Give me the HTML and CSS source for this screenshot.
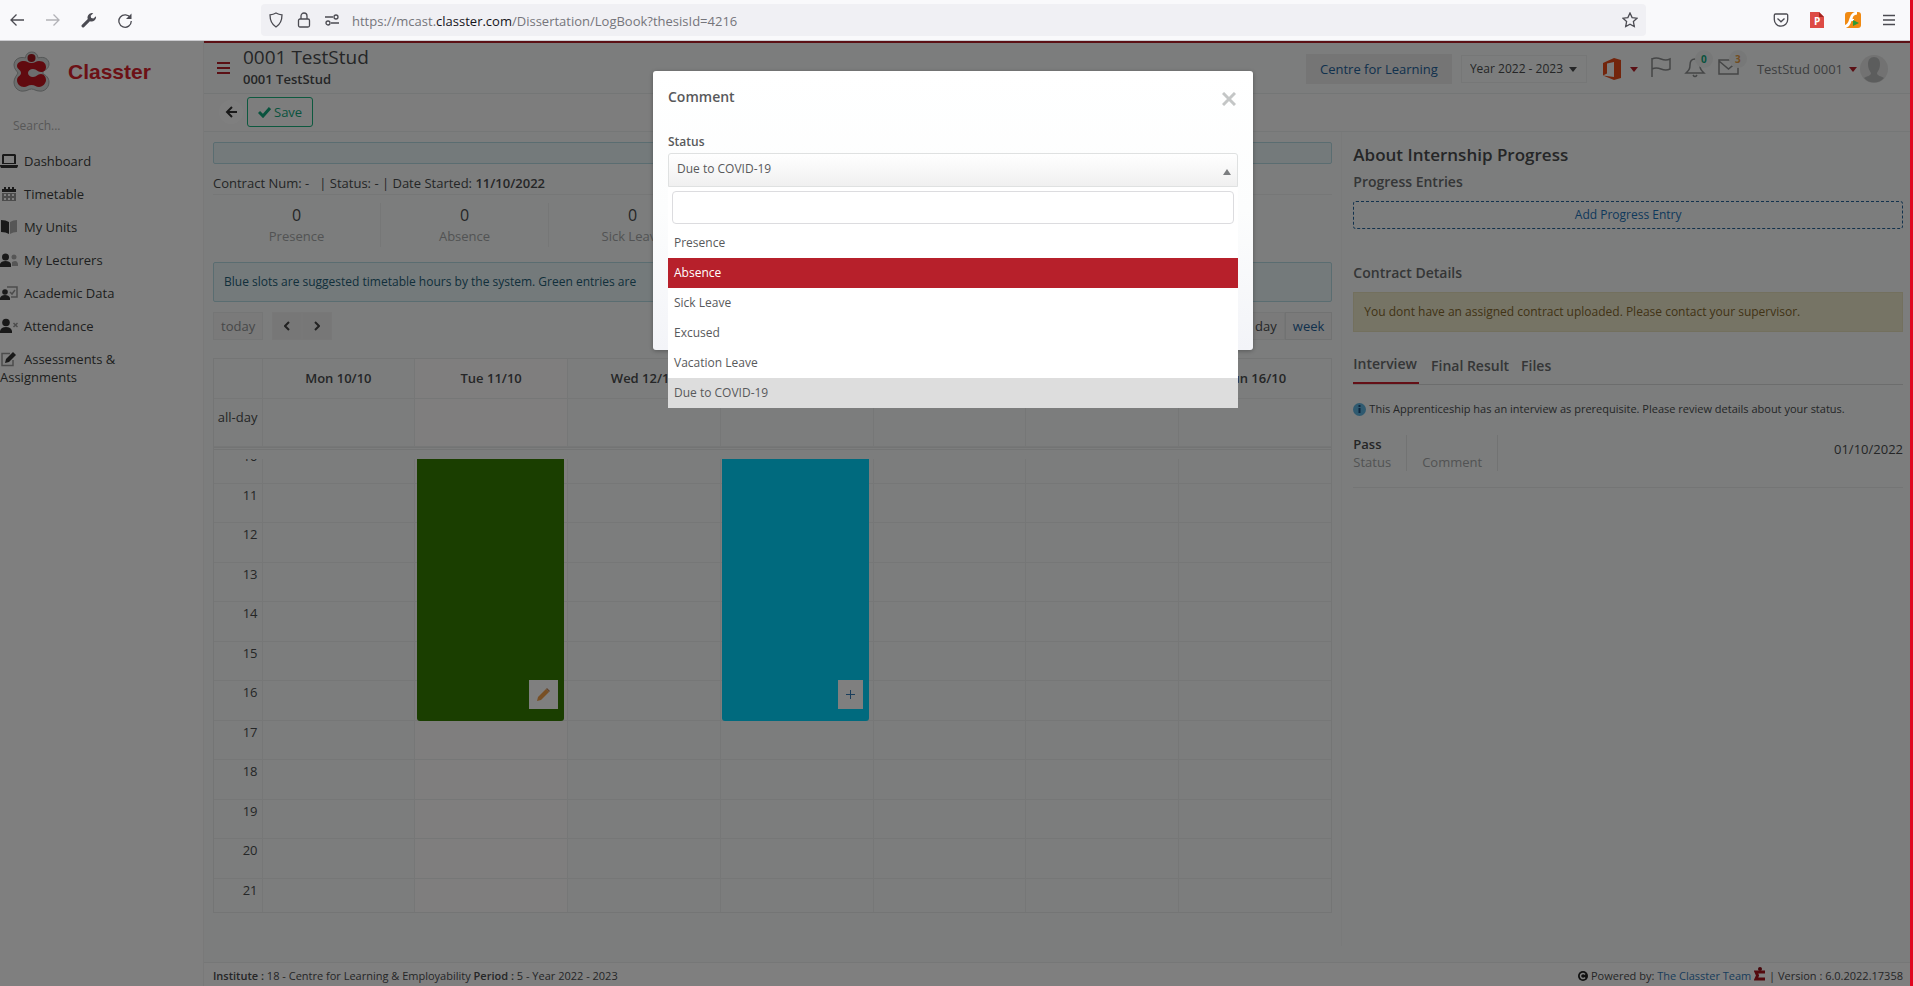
FILE: index.html
```
<!DOCTYPE html>
<html lang="en">

<head>
    <meta charset="UTF-8">
    <meta name="viewport" content="width=device-width, initial-scale=1.0">
    <title>Classter - Log Book</title>
    <link rel="stylesheet" href="styles.css">
</head>

<body>
    <!-- Browser toolbar -->
    <div class="browser">
        <div class="browser-nav">
            <button class="browser-btn" aria-label="Back">
                <svg width="16" height="16" viewBox="0 0 16 16"><path d="M15 8H2M7.500 2.500L2 8l5.500 5.500" /></svg>
            </button>
            <button class="browser-btn browser-btn-off" aria-label="Forward" disabled>
                <svg width="16" height="16" viewBox="0 0 16 16"><path d="M1 8h13M8.500 2.500L14 8l-5.500 5.500" /></svg>
            </button>
            <button class="browser-btn" aria-label="Tools">
                <svg width="16" height="16" viewBox="0 0 16 16"><path class="solid" d="M10.500 1a4.500 4.500 0 0 0-3.700 6.100L1 12.800a1.400 1.400 0 0 0 2.200 2.200l5.700-5.800A4.500 4.500 0 0 0 15 4.300l-2.600 2.200-2.200-.5-.6-2.300L12.300 1.300A4.500 4.500 0 0 0 10.500 1z" /></svg>
            </button>
            <button class="browser-btn" aria-label="Reload">
                <svg width="16" height="16" viewBox="0 0 16 16"><path d="M13.500 6A6.200 6.200 0 1 0 14.300 9" /><path class="solid" d="M14.500 1.500v5.500H9z" /></svg>
            </button>
        </div>
        <div class="address">
            <svg width="16" height="16" viewBox="0 0 16 16"><path d="M8 1c2 1.200 4 1.700 6 1.800 0 5.200-1 9.200-6 12.200C3 12 2 8 2 2.800 4 2.700 6 2.200 8 1z" /></svg>
            <svg width="16" height="16" viewBox="0 0 16 16"><rect x="2.500" y="7" width="11" height="8" rx="1.500" /><path d="M5 7V4a3 3 0 0 1 6 0v3" /></svg>
            <svg width="16" height="16" viewBox="0 0 16 16"><path d="M1 5h8M7 11h8" /><circle cx="12" cy="5" r="2" /><circle cx="4" cy="11" r="2" /></svg>
            <div class="address-text" role="textbox" aria-label="Address">https://mcast.<b>classter.com</b>/Dissertation/LogBook?thesisId=4216</div>
            <svg width="16" height="16" viewBox="0 0 16 16"><path d="M8 1l2.100 4.600 4.900.6-3.600 3.400.9 5L8 12.200l-4.300 2.400.9-5L1 6.200l4.900-.6z" /></svg>
        </div>
        <div class="browser-ext">
            <button class="browser-btn" aria-label="Pocket">
                <svg width="16" height="16" viewBox="0 0 16 16"><path d="M2.500 2h11a1.200 1.200 0 0 1 1.200 1.200V7.500a6.700 6.700 0 0 1-13.400 0V3.200A1.200 1.200 0 0 1 2.500 2zM4.500 6.500L8 9.800l3.500-3.300" /></svg>
            </button>
            <button class="browser-btn" aria-label="PDF">
                <svg width="16" height="16" viewBox="0 0 16 16"><path class="plain" fill="#dd4b45" d="M1 0h9l5 5v11H1z" /><path class="plain" fill="#a32521" d="M10 0l5 5h-5z" /><text x="5" y="13" class="pdf-letter">P</text></svg>
            </button>
            <button class="browser-btn" aria-label="Flash">
                <svg width="16" height="16" viewBox="0 0 16 16"><rect class="plain" width="16" height="16" rx="3" fill="#f08a12" /><path class="plain" fill="#fff" d="M10 0C6 1 5 5 4 8c-1 3-2 4-4 5v3c4-1 5-3 6.500-7H9V7H7.500C8 4 9 3 12 2.500L12 0z" /><path class="plain" fill="#2c9a35" d="M8 8l6 3-6 3z" /></svg>
            </button>
            <button class="browser-btn" aria-label="Menu">
                <svg width="16" height="16" viewBox="0 0 16 16"><path d="M2 3.500h12M2 8h12M2 12.500h12" /></svg>
            </button>
        </div>
    </div>

    <div class="page">
        <!-- Sidebar -->
        <aside class="sidebar">
            <div class="brand">
                <svg width="37" height="42" viewBox="0 0 37 42">
                    <g fill="#d8dcdc" stroke="#a9adad" stroke-width="1">
                        <path d="M18.500 1a6 6 0 0 0-6 6C6 5 1 9 1 14c0 4 3 6 4 8-1 2-4 5-4 9 0 6 5 10 10 9 3 0 5-2 7.500-2s4.500 2 7.500 2c5 1 10-3 10-9 0-4-3-7-6-8v-3c3-1 6-3 6-7 0-5-5-8-11-6a6 6 0 0 0-6.500-6z" />
                    </g>
                    <circle cx="18.500" cy="7" r="4" fill="#a0141c" />
                    <path fill="#c3141f" d="M11 10c3 0 4 2 7.500 2S23 10 26 10c5 0 7 3 7 6s-2 5-5 5c-4 0-4-3-8-3-3 0-5 2-5 4s2 4 5 4c4 0 4-3 8-3 3 0 5 3 5 6s-3 7-7 7c-3 0-4-2-7.500-2S14 36 11 36c-4 0-7-3-7-7s4-4 4-7-4-4-4-7 3-5 7-5z" />
                </svg>
                <span class="brand-name">Classter</span>
            </div>
            <input class="search" type="text" placeholder="Search..." aria-label="Search">
            <nav class="menu">
                <a href="#"><svg viewBox="0 0 18 16"><path fill-rule="evenodd" d="M3 1h12l1 1v9H2V2zM4 3v7h10V3zM0 12h18v1l-1 2H1l-1-2z" /></svg>Dashboard</a>
                <a href="#"><svg viewBox="0 0 18 16"><path d="M2 3h14v3H2zM4 1h2v3H4zM8 1h2v3H8zM12 1h2v3h-2z" /><path opacity=".5" fill-rule="evenodd" d="M2 7h14v8H2zM4 8v2h2V8zM8 8v2h2V8zM12 8v2h2V8zM4 12v2h2v-2zM8 12v2h2v-2zM12 12v2h2v-2z" /></svg>Timetable</a>
                <a href="#"><svg viewBox="0 0 18 16"><path d="M1 1q5 0 8 2v12q-3-2-8-2z" /><path opacity=".4" d="M17 1q-4 0-7 2v12q3-2 7-2z" /></svg>My Units</a>
                <a href="#"><svg viewBox="0 0 18 16"><circle cx="5.500" cy="5" r="3.500" /><path d="M0 15v-3q1-3 5.500-3T11 12v3z" /><g opacity=".4"><circle cx="14" cy="5" r="2.500" /><path d="M12 14v-4q5-3 6 2v2z" /></g></svg>My Lecturers</a>
                <a href="#"><svg viewBox="0 0 18 16"><circle cx="5" cy="7" r="2.800" /><path d="M0 15v-2q1-3 5-3t5 3v2z" /><path opacity=".5" fill="none" stroke="#333" stroke-width="1.500" d="M7 2h10v10h-6M10 7l2 2 3-4" /></svg>Academic Data</a>
                <a href="#"><svg viewBox="0 0 18 16"><circle cx="6" cy="4.500" r="3.800" /><path d="M0 15v-2q1-4 6-4t6 4v2z" /><path opacity=".5" stroke="#333" stroke-width="1.500" d="M13.500 5l4 4M17.500 5l-4 4" /></svg>Attendance</a>
                <a href="#"><svg viewBox="0 0 18 16"><path opacity=".5" fill="none" stroke="#333" stroke-width="1.500" d="M10 2.500H2v12h11V9" /><path d="M5 12l1-4 7-7 3 3-7 7z" /></svg>Assessments &amp; Assignments</a>
            </nav>
        </aside>

        <div class="main">
            <header class="topbar">
                <button class="burger" aria-label="Toggle menu"><svg width="13" height="13" viewBox="0 0 13 13"><path d="M0 0h13v2H0zM0 5h13v2H0zM0 10h13v2H0z" /></svg></button>
                <div class="student">
                    <div class="student-name">0001 TestStud</div>
                    <div class="student-sub">0001 TestStud</div>
                </div>
                <div class="topbar-right">
                    <button class="centre-btn">Centre for Learning</button>
                    <span class="year-wrap">
                        <select class="year" aria-label="Year">
                            <option>Year 2022 - 2023</option>
                        </select>
                    </span>
                    <button class="office" aria-label="Office">
                        <svg width="18" height="22" viewBox="0 0 18 22"><path fill="#e64a19" fill-rule="evenodd" d="M0 5L11 0l7 2v18l-7 2L0 17.500l11 1.500V4L4 5.500v10L0 17.500z" /></svg>
                        <i class="caret"></i>
                    </button>
                    <div class="notices">
                        <a href="#" aria-label="Flag"><svg width="22" height="22" viewBox="0 0 22 22"><path d="M2 2v19M2 3q4-2 9 0t9 0v10q-4 2-9 0t-9 0" /></svg></a>
                        <a href="#" aria-label="Alerts"><svg width="22" height="22" viewBox="0 0 22 22"><path d="M11 3C7 3 6 6 6 9c0 4-1 5-4 8h18c-3-3-4-4-4-8 0-3-1-6-5-6zM9 19q2 3 4 0" /></svg><span class="badge">0</span></a>
                        <a href="#" aria-label="Messages"><svg width="22" height="22" viewBox="0 0 22 22"><path d="M1 4h19v14H1zM1 5l9.500 8L20 5" /></svg><span class="badge badge-orange">3</span></a>
                    </div>
                    <button class="user">TestStud 0001 <i class="caret"></i></button>
                    <svg class="avatar" width="28" height="28" viewBox="0 0 28 28"><circle cx="14" cy="14" r="14" fill="#e4e4e4" /><path fill="#b9bbbb" d="M14 2c-4 0-6 3-6 7 0 5 2 7 3 9 0 3-4 3-7 5 5 6 15 6 20 0-3-2-7-2-7-5 1-2 3-4 3-9 0-4-2-7-6-7z" /></svg>
                </div>
            </header>

            <div class="actions">
                <button class="back" aria-label="Back"><svg width="13" height="12" viewBox="0 0 13 12"><path d="M12 6H2M7 1L2 6l5 5" /></svg></button>
                <button class="save"><svg width="13" height="12" viewBox="0 0 13 12"><path d="M1 6l4 4 7-8" /></svg>Save</button>
            </div>

            <div class="content">
                <section class="logbook">
                    <div class="alert-empty"></div>
                    <p class="contract">Contract Num: - &nbsp; | Status: - | Date Started: <b>11/10/2022</b></p>
                    <div class="stats">
                        <div class="stat"><b>0</b><span>Presence</span></div>
                        <div class="stat"><b>0</b><span>Absence</span></div>
                        <div class="stat"><b>0</b><span>Sick Leave</span></div>
                    </div>
                    <div class="alert-info">Blue slots are suggested timetable hours by the system. Green entries are</div>

                    <div class="cal-toolbar">
                        <button class="cal-btn cal-today">today</button>
                        <div class="cal-group">
                            <button class="cal-btn" aria-label="Previous"><svg width="6" height="10" viewBox="0 0 6 10"><path d="M5 1L1 5l4 4" /></svg></button>
                            <button class="cal-btn" aria-label="Next"><svg width="6" height="10" viewBox="0 0 6 10"><path d="M1 1l4 4-4 4" /></svg></button>
                        </div>
                        <div class="cal-group cal-views">
                            <button class="cal-btn">day</button>
                            <button class="cal-btn cal-active">week</button>
                        </div>
                    </div>

                    <div class="calendar">
                        <table class="cal-table">
                            <colgroup><col class="axis"><col><col><col><col><col><col><col></colgroup>
                            <thead>
                                <tr>
                                    <th></th>
                                    <th>Mon 10/10</th>
                                    <th class="is-today">Tue 11/10</th>
                                    <th>Wed 12/10</th>
                                    <th>Thu 13/10</th>
                                    <th>Fri 14/10</th>
                                    <th>Sat 15/10</th>
                                    <th>Sun 16/10</th>
                                </tr>
                            </thead>
                            <tbody>
                                <tr class="all-day">
                                    <td class="hour">all-day</td>
                                    <td></td><td class="is-today"></td><td></td><td></td><td></td><td></td><td></td>
                                </tr>
                            </tbody>
                        </table>
                        <div class="cal-divider"></div>
                        <div class="cal-scroller">
                            <div class="cal-hours">
                                <table class="cal-table cal-grid">
                                    <colgroup><col class="axis"><col><col><col><col><col><col><col></colgroup>
                                    <tbody>
                                        <tr><td class="hour">10</td><td></td><td class="is-today"></td><td></td><td></td><td></td><td></td><td></td></tr>
                                        <tr><td class="hour">11</td><td></td><td class="is-today"></td><td></td><td></td><td></td><td></td><td></td></tr>
                                        <tr><td class="hour">12</td><td></td><td class="is-today"></td><td></td><td></td><td></td><td></td><td></td></tr>
                                        <tr><td class="hour">13</td><td></td><td class="is-today"></td><td></td><td></td><td></td><td></td><td></td></tr>
                                        <tr><td class="hour">14</td><td></td><td class="is-today"></td><td></td><td></td><td></td><td></td><td></td></tr>
                                        <tr><td class="hour">15</td><td></td><td class="is-today"></td><td></td><td></td><td></td><td></td><td></td></tr>
                                        <tr><td class="hour">16</td><td></td><td class="is-today"></td><td></td><td></td><td></td><td></td><td></td></tr>
                                        <tr><td class="hour">17</td><td></td><td class="is-today"></td><td></td><td></td><td></td><td></td><td></td></tr>
                                        <tr><td class="hour">18</td><td></td><td class="is-today"></td><td></td><td></td><td></td><td></td><td></td></tr>
                                        <tr><td class="hour">19</td><td></td><td class="is-today"></td><td></td><td></td><td></td><td></td><td></td></tr>
                                        <tr><td class="hour">20</td><td></td><td class="is-today"></td><td></td><td></td><td></td><td></td><td></td></tr>
                                        <tr><td class="hour">21</td><td></td><td class="is-today"></td><td></td><td></td><td></td><td></td><td></td></tr>
                                    </tbody>
                                </table>
                                <div class="cal-events">
                                    <div class="event event-green">
                                        <button class="event-btn" aria-label="Edit entry"><svg width="13" height="13" viewBox="0 0 13 13"><path fill="#f0a04b" d="M0 13l1-4 8-8 3 3-8 8z" /><path fill="#c98a5a" d="M9 1l1-1 3 3-1 1z" /></svg></button>
                                    </div>
                                    <div class="event event-blue">
                                        <button class="event-btn event-add" aria-label="Add entry"><svg width="9" height="9" viewBox="0 0 9 9"><path stroke="#337ab7" stroke-width="1" d="M4.500 0v9M0 4.500h9" /></svg></button>
                                    </div>
                                </div>
                            </div>
                        </div>
                    </div>
                </section>

                <section class="about">
                    <h2>About Internship Progress</h2>
                    <h3>Progress Entries</h3>
                    <button class="add-entry">Add Progress Entry</button>
                    <h3>Contract Details</h3>
                    <div class="alert-warning">You dont have an assigned contract uploaded. Please contact your supervisor.</div>
                    <div class="tabs">
                        <a href="#" class="tab tab-active">Interview</a>
                        <a href="#" class="tab">Final Result</a>
                        <a href="#" class="tab">Files</a>
                    </div>
                    <p class="note"><svg width="13" height="13" viewBox="0 0 13 13"><circle cx="6.500" cy="6.500" r="6.500" fill="#5fb4e0" /><path stroke="#1c4c7c" stroke-width="2" d="M6.500 2v2M6.500 5v5" /></svg>This Apprenticeship has an interview as prerequisite. Please review details about your status.</p>
                    <div class="result">
                        <div class="result-cell"><b>Pass</b><span>Status</span></div>
                        <div class="result-cell"><b>&nbsp;</b><span>Comment</span></div>
                        <div class="result-date">01/10/2022</div>
                    </div>
                </section>
            </div>

            <footer class="footer">
                <div><b>Institute :</b> 18 - Centre for Learning &amp; Employability <b>Period :</b> 5 - Year 2022 - 2023</div>
                <div class="powered">
                    <svg width="10" height="10" viewBox="0 0 10 10"><circle cx="5" cy="5" r="5" fill="#222" /><path fill="none" stroke="#fff" stroke-width="1.500" d="M7 3.500a2.500 2.500 0 1 0 0 3" /></svg>
                    Powered by: <a href="#">The Classter Team</a>
                    <svg width="12" height="14" viewBox="0 0 12 14"><circle cx="6" cy="2" r="2" fill="#8e0f16" /><path fill="none" stroke="#a8121b" stroke-width="3" d="M11 5H2l1.500 3.500L2 12h9M6 5v1" /></svg>
                    | Version : 6.0.2022.17358
                </div>
            </footer>
        </div>

        <!-- Comment dialog -->
        <div class="backdrop">
            <div class="modal" role="dialog" aria-labelledby="modalTitle">
                <div class="modal-head">
                    <h4 id="modalTitle">Comment</h4>
                    <button class="close" aria-label="Close"><svg width="14" height="14" viewBox="0 0 14 14"><path d="M1 1l12 12M13 1L1 13" /></svg></button>
                </div>
                <label class="field-label" for="status">Status</label>
                <div class="select-wrap">
                    <select class="status" id="status">
                        <option>Due to COVID-19</option>
                    </select>
                    <div class="options">
                        <input class="options-search" type="text" aria-label="Filter status">
                        <ul role="listbox">
                            <li role="option">Presence</li>
                            <li role="option" class="option-hover">Absence</li>
                            <li role="option">Sick Leave</li>
                            <li role="option">Excused</li>
                            <li role="option">Vacation Leave</li>
                            <li role="option" class="option-selected" aria-selected="true">Due to COVID-19</li>
                        </ul>
                    </div>
                </div>
            </div>
        </div>
    </div>
</body>

</html>
```
FILE: styles.css
```
* {
    box-sizing: border-box;
}

body {
    margin: 0;
    min-height: 100vh;
    display: flex;
    flex-direction: column;
    border-right: 3px solid #e0061f;
    background: #fff;
    color: #4a4c4e;
    font-family: "Open Sans", "Noto Sans", sans-serif;
    font-size: 13px;
    line-height: 18px;
}

button,
input,
select {
    margin: 0;
    padding: 0;
    border: 0;
    background: none;
    color: inherit;
    font: inherit;
}

button {
    cursor: pointer;
}

a {
    color: #337ab7;
    text-decoration: none;
}

b {
    font-weight: 600;
}

h2,
h3,
h4,
p,
ul {
    margin: 0;
    padding: 0;
}

svg {
    flex: none;
}

/* Browser toolbar */
.browser {
    height: 41px;
    display: flex;
    align-items: center;
    background: #f9f9fb;
    border-bottom: 1px solid #ccccd0;
}

.browser svg {
    fill: none;
    stroke: #4b4b52;
    stroke-width: 1.3;
}

.browser .solid {
    fill: #4b4b52;
    stroke: none;
}

.browser .plain {
    stroke: none;
}

.browser .pdf-letter {
    fill: #fff;
    stroke: none;
    font-size: 10px;
    font-weight: 700;
}

.browser-nav {
    width: 261px;
    display: flex;
    gap: 20px;
    padding-left: 9px;
}

.browser-btn {
    width: 16px;
    height: 16px;
    display: flex;
}

.browser-btn-off {
    opacity: .4;
}

.address {
    flex: 1;
    height: 32px;
    display: flex;
    align-items: center;
    gap: 12px;
    padding: 0 8px 0 7px;
    border-radius: 4px;
    background: #f0f0f4;
}

.address-text {
    flex: 1;
    padding-top: 1px;
    color: #75757b;
}

.address-text b {
    font-weight: 400;
    color: #15141a;
}

.browser-ext {
    width: 264px;
    display: flex;
    justify-content: flex-end;
    gap: 20px;
    padding-right: 13px;
}

/* Page layout */
.page {
    flex: 1;
    display: flex;
    position: relative;
}

.sidebar {
    width: 203px;
    flex: none;
    background: #fff;
}

.main {
    flex: 1;
    min-width: 0;
    display: flex;
    flex-direction: column;
    background: #f8fbfa;
    border-left: 1px solid #f2f3f3;
}

/* Sidebar */
.brand {
    display: flex;
    align-items: center;
    gap: 18px;
    padding: 10px 0 0 13px;
}

.brand-name {
    color: #d8232d;
    font-family: "Liberation Sans", Arial, sans-serif;
    font-size: 21px;
    font-weight: 700;
    line-height: 24px;
}

.search {
    display: block;
    width: 100%;
    height: 32px;
    margin-top: 16px;
    padding-left: 13px;
    font-size: 12px;
}

.search::placeholder {
    color: #b0b0b0;
}

.menu {
    padding-top: 4px;
}

.menu a {
    display: block;
    padding: 7px 60px 8px 0;
    color: #3c3e40;
}

.menu svg {
    width: 18px;
    height: 16px;
    margin-right: 6px;
    vertical-align: -3px;
    fill: #333;
}

/* Top bar */
.topbar {
    height: 53px;
    display: flex;
    align-items: center;
    border-top: 2px solid #b7202b;
    border-bottom: 1px solid #e9eded;
    padding: 0 22px 0 13px;
}

.burger {
    margin-right: 13px;
    display: flex;
    fill: #b7202b;
}

.student {
    padding-bottom: 2px;
}

.student-name {
    font-size: 19px;
    line-height: 24px;
}

.student-sub {
    font-weight: 600;
    line-height: 20px;
}

.topbar-right {
    margin-left: auto;
    display: flex;
    align-items: center;
    padding-top: 2px;
}

.centre-btn {
    height: 30px;
    padding: 0 14px;
    background: #eaeaea;
    color: #23629b;
}

.year-wrap {
    position: relative;
    margin-left: 9px;
    border: 1px solid #eceeee;
}

.year {
    appearance: none;
    display: block;
    width: 124px;
    height: 26px;
    padding-left: 8px;
    font-size: 12px;
}

.caret,
.year-wrap::after {
    display: inline-block;
    border: 4px solid transparent;
    border-top: 5px solid #b7202b;
    border-bottom: 0;
}

.year-wrap::after {
    content: "";
    position: absolute;
    top: 11px;
    right: 9px;
    border-top-color: #4a4c4e;
}

.office {
    display: flex;
    align-items: center;
    gap: 9px;
    margin-left: 16px;
}

.notices {
    display: flex;
    gap: 12px;
    margin: -4px 0 0 12px;
}

.notices a {
    position: relative;
    display: flex;
}

.notices svg {
    fill: none;
    stroke: #8b8d8e;
    stroke-width: 1.5;
}

.badge {
    position: absolute;
    top: -6px;
    left: 11px;
    width: 18px;
    height: 18px;
    border-radius: 9px;
    background: #eff1f0;
    color: #12a67c;
    font-size: 10px;
    font-weight: 700;
    text-align: center;
}

.badge-orange {
    color: #e59b45;
}

.user {
    margin-left: 17px;
    display: flex;
    align-items: center;
    gap: 6px;
    color: #7c7e80;
}

.avatar {
    margin-left: 3px;
}

/* Action row */
.actions {
    height: 38px;
    display: flex;
    align-items: center;
    gap: 4px;
    padding: 0 0 2px 15px;
    background: #fafafa;
    border-bottom: 1px solid #ebeeee;
}

.back {
    width: 24px;
    height: 24px;
    display: flex;
    align-items: center;
    justify-content: center;
    border-radius: 12px;
    background: #fff;
}

.back svg,
.save svg {
    fill: none;
    stroke: #333;
    stroke-width: 2;
}

.save {
    height: 30px;
    display: flex;
    align-items: center;
    gap: 3px;
    padding: 0 10px;
    border: 1px solid #1ab37e;
    border-radius: 3px;
    color: #12a67c;
}

.save svg {
    stroke: #12a67c;
    stroke-width: 3;
}

/* Content columns */
.content {
    flex: 1;
    display: grid;
    grid-template-columns: minmax(0, 2fr) minmax(0, 1fr);
}

.logbook {
    padding: 10px 9px 10px 9px;
}

.about {
    margin-bottom: 16px;
    padding: 10px 7px 10px 11px;
    border-left: 1px solid #f2f5f4;
}

.alert-empty,
.alert-info {
    border: 1px solid #b5dbe3;
    border-radius: 2px;
    background: #e8f4f7;
}

.alert-empty {
    height: 22px;
}

.contract {
    padding: 10px 0 2px;
    border-bottom: 1px solid #eceeee;
}

.stats {
    display: flex;
    padding: 8px 0 15px;
}

.stat {
    width: 168px;
    display: flex;
    flex-direction: column;
    align-items: center;
    padding-bottom: 2px;
    border-right: 1px solid #eceeee;
}

.stat b {
    font-size: 16px;
    font-weight: 400;
    line-height: 24px;
}

.stat span {
    color: #a5a7a8;
}

.alert-info {
    height: 40px;
    padding: 10px;
    color: #245f77;
    font-size: 12px;
}

/* Calendar toolbar */
.cal-toolbar {
    display: flex;
    gap: 9px;
    margin: 10px 0 18px;
}

.cal-btn {
    height: 28px;
    padding: 0 7px;
    border: 1px solid #eaecec;
    background: #f4f4f4;
}

.cal-today {
    width: 50px;
    color: #8f9192;
}

.cal-group {
    display: flex;
}

.cal-group svg {
    fill: none;
    stroke: #444;
    stroke-width: 2;
}

.cal-group .cal-btn[aria-label] {
    width: 30px;
    border-color: #f0f0f0;
    background: #efefef;
}

.cal-views {
    margin-left: auto;
}

.cal-views .cal-active {
    border-color: #e2e4e4;
    color: #23629b;
}

/* Calendar */
.calendar {
    border: 1px solid #e8ebeb;
}

.cal-table {
    width: 100%;
    table-layout: fixed;
    border-collapse: collapse;
}

.axis {
    width: 48px;
}

.cal-table th,
.cal-table td {
    padding: 0;
    border-right: 1px solid #ecefef;
    border-bottom: 1px solid #ecefef;
}

.cal-table th:last-child,
.cal-table td:last-child {
    border-right: 0;
}

.cal-table th {
    height: 39px;
    font-weight: 600;
}

.cal-table .hour {
    padding-right: 4px;
    text-align: right;
    vertical-align: top;
    padding-top: 2px;
}

.cal-table .is-today {
    background: #fffcfd;
}

.cal-table .all-day td {
    height: 48px;
}

.cal-table .all-day .hour {
    padding-top: 9px;
}

.cal-divider {
    height: 12px;
    border-top: 3px double #e6e9e9;
}

.cal-scroller {
    height: 453px;
    overflow: hidden;
}

.cal-hours {
    position: relative;
    margin-top: -14px;
}

.cal-grid {
    height: 474px;
}

/* One column per day, one row per hour, over the table */
.cal-events {
    position: absolute;
    inset: 0;
    display: grid;
    grid-template-columns: 48px repeat(7, 1fr);
    grid-template-rows: repeat(12, 1fr);
}

.event {
    grid-row: 1 / 8;
    display: flex;
    align-items: flex-end;
    justify-content: flex-end;
    margin: 0 4px 0 2px;
    padding: 0 6px 12px;
    border-radius: 3px;
}

.event-green {
    grid-column: 3;
    background: #347c00;
}

.event-blue {
    grid-column: 5;
    background: #00d4fc;
}

.event-btn {
    width: 29px;
    height: 29px;
    display: flex;
    align-items: center;
    justify-content: center;
    background: #fff;
}

.event-add {
    width: 25px;
}

/* Right column */
.about h2 {
    padding-top: 1px;
    font-size: 17px;
    font-weight: 600;
    line-height: 24px;
}

.about h3 {
    margin-top: 5px;
    color: #6a6c6e;
    font-size: 14px;
    font-weight: 600;
    line-height: 20px;
}

.add-entry {
    display: block;
    width: 100%;
    height: 28px;
    margin: 9px 0 34px;
    border: 1px dashed #23629b;
    border-radius: 3px;
    color: #1c72b8;
    font-size: 12px;
}

.alert-warning {
    height: 40px;
    margin-top: 9px;
    padding: 10px;
    border: 1px solid #e6e1bc;
    background: #ece9cb;
    color: #84672c;
    font-size: 12px;
}

.tabs {
    display: flex;
    align-items: flex-end;
    gap: 12px;
    margin-top: 22px;
    border-bottom: 1px solid #d8dada;
}

.tab {
    padding: 0 0 8px;
    color: #6a6c6e;
    font-size: 14px;
    font-weight: 600;
    line-height: 20px;
}

.tab-active {
    padding-right: 2px;
    border-bottom: 2px solid #c91f2c;
}

.note {
    display: flex;
    align-items: center;
    gap: 3px;
    margin: 15px 0 17px;
    font-size: 11px;
}

.result {
    display: flex;
    padding-bottom: 16px;
    border-bottom: 1px solid #e8ebeb;
}

.result-cell {
    display: flex;
    flex-direction: column;
    margin-right: 15px;
    padding-right: 15px;
    border-right: 1px solid #e4e7e7;
}

.result-cell span {
    color: #a5a7a8;
}

.result-date {
    margin-left: auto;
    padding-top: 5px;
}

/* Footer */
.footer {
    height: 24px;
    display: flex;
    justify-content: space-between;
    align-items: center;
    padding: 2px 7px 0 9px;
    background: #fff;
    border-top: 1px solid #eceeee;
    font-size: 11px;
    white-space: nowrap;
}

.powered svg {
    vertical-align: -1px;
}

/* Comment dialog */
.backdrop {
    position: absolute;
    inset: 0;
    padding: 30px 4px 0 0;
    background: rgba(0, 0, 0, .5);
}

.modal {
    width: 600px;
    min-height: 279px;
    margin: 0 auto;
    padding: 15px;
    border-radius: 3px;
    background: linear-gradient(#fff, #fcfdfd 50%, #f3f4f8);
    box-shadow: 0 1px 4px rgba(0, 0, 0, .3);
    color: #58595b;
}

.modal-head {
    display: flex;
    justify-content: space-between;
    align-items: center;
    margin-bottom: 25px;
}

.modal h4 {
    font-size: 14px;
    font-weight: 600;
    line-height: 22px;
}

.close {
    display: flex;
    padding: 4px 2px 0 0;
}

.close svg {
    fill: none;
    stroke: #c4c6c6;
    stroke-width: 3;
}

.field-label {
    display: block;
    margin-bottom: 2px;
    font-size: 12px;
    font-weight: 600;
}

.select-wrap {
    position: relative;
}

.select-wrap::after {
    content: "";
    position: absolute;
    top: 16px;
    right: 7px;
    border: 4px solid transparent;
    border-top: 0;
    border-bottom: 6px solid #7c7e80;
}

.status {
    appearance: none;
    display: block;
    width: 100%;
    height: 34px;
    padding: 0 8px 2px;
    border: 1px solid #dfe1e1;
    border-radius: 3px 3px 0 0;
    background: linear-gradient(#fff, #f0f0f0);
    font-size: 12px;
}

.options {
    position: absolute;
    top: 34px;
    left: 0;
    right: 0;
    background: #fff;
}

.options-search {
    display: block;
    width: calc(100% - 8px);
    height: 33px;
    margin: 4px;
    padding: 0 8px;
    border: 1px solid #dcdcdf;
    border-radius: 4px;
    background: #fff;
}

.options ul {
    list-style: none;
}

.options li {
    height: 30px;
    padding: 6px;
    font-size: 12px;
}

.options .option-hover {
    background: #b7202b;
    color: #fff;
}

.options .option-selected {
    background: #ddd;
}
```
